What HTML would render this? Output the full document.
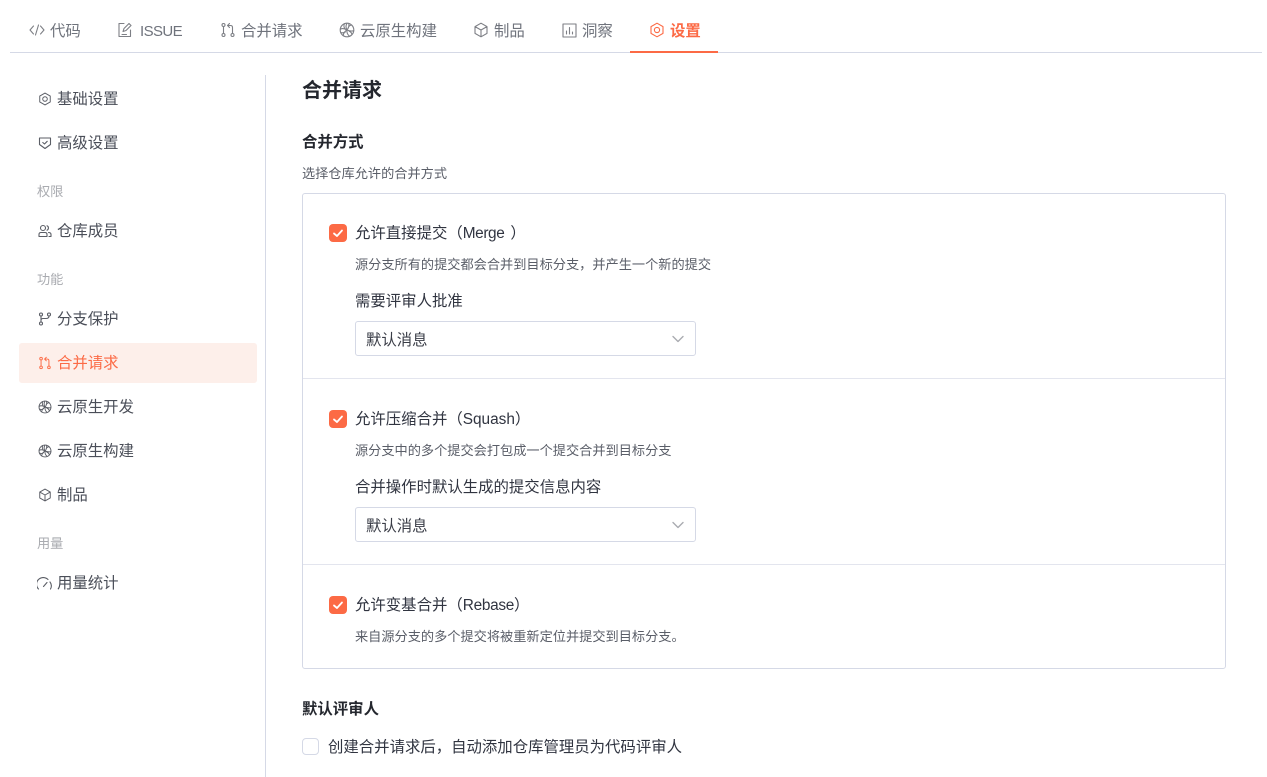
<!DOCTYPE html>
<html lang="zh"><head><meta charset="utf-8"><title>合并请求</title>
<style>
*{box-sizing:border-box}
html,body{margin:0;padding:0;width:1267px;height:777px;overflow:hidden;background:#fff}
body{position:relative;font-family:"Liberation Sans","Noto Sans CJK SC",sans-serif;color:#303440}
.t{position:absolute;white-space:nowrap;line-height:20px;font-size:15.4px}
.tab{color:#6f737c;top:22px}
.side{color:#4a4e58;}
.grp{color:#a9abb0;font-size:13.2px}
.d{font-size:13.2px;color:#5a5e68}
svg{position:absolute;fill:none;stroke-width:1.1;stroke-linecap:round;stroke-linejoin:round}
.g{stroke:#7d7f85}
.s{stroke:#5b5e66}
.o{stroke:#fc6a45}
.box{position:absolute;width:18px;height:18px;border-radius:4px;background:#fc6a45}
.box svg{left:0;top:0;stroke:#fff;stroke-width:1.8}
.sel{position:absolute;left:355px;width:341px;height:35px;border:1px solid #d5d9e6;border-radius:3px;background:#fff}
.sel svg{left:315px;top:10px;stroke:#a9abb0;stroke-width:1.4}
.sel span{position:absolute;left:10px;top:9px;line-height:20px;font-size:15.4px;color:#3a3d47}
</style></head><body>
<svg width="0" height="0" style="position:absolute"><defs>
<g id="hex"><path d="M8 1.200l6 3.400v6.800l-6 3.400-6-3.400V4.600z"/><circle cx="8" cy="8" r="2.600"/></g>
<g id="pr"><circle cx="3.500" cy="3" r="1.500"/><circle cx="3.500" cy="13" r="1.500"/><circle cx="12.500" cy="13" r="1.500"/><path d="M3.500 4.500v7M12.500 11.500V5.500q0-2-2-2H8M9.500 1.500L7.500 3.500l2 2"/></g>
<g id="cloud"><circle cx="8" cy="8" r="6.800"/><path d="M8 1.200q-2 3.300 0 6.800M8 8q-3.800-2.300-6.500-.8M8 8q-3.300 1.800-3.800 5.500M8 8q-.5 3.800 2.500 6.300M8 8q3.500 1.500 6.700.8M8 8q2.500-3 1.800-6.600M5.300 1.800q-1 3 .7 5M12.600 3q-2.500.5-3.300 2.500M1.800 10.500q2.500.8 4.500-.5M13 12.500q-.5-2.300-2.800-3.200"/></g>
<g id="box"><path d="M8 1.200l6 3.400v6.800l-6 3.400-6-3.400V4.600zM2 4.600L8 8l6-3.400M8 8v6.800"/></g>
</defs></svg>

<div style="position:absolute;left:10px;top:52px;width:1252px;height:1px;background:#d5d9e6"></div>
<div style="position:absolute;left:630px;top:51px;width:88px;height:2px;background:#fc6a45"></div>

<svg class="g" style="left:29px;top:22px" width="16" height="16" viewBox="0 0 16 16"><path d="M4.500 4L1 8l3.500 4M11.500 4L15 8l-3.500 4M9.500 3L6.500 13"/></svg>
<span class="t tab" style="left:50px">代码</span>
<svg class="g" style="left:118px;top:22px" width="15" height="16" viewBox="0 0 15 16"><path d="M6 1.500H1v13h11.500V8M5 9.500l1-3 5-5 2 2-5 5zM4 12.500h4.500"/></svg>
<span class="t tab" style="left:140px;font-size:15px;letter-spacing:-.6px">ISSUE</span>
<svg class="g" style="left:220px;top:22px" width="16" height="16" viewBox="0 0 16 16"><use href="#pr"/></svg>
<span class="t tab" style="left:241px">合并请求</span>
<svg class="g" style="left:339px;top:22px" width="16" height="16" viewBox="0 0 16 16"><use href="#cloud"/></svg>
<span class="t tab" style="left:360px">云原生构建</span>
<svg class="g" style="left:473px;top:22px" width="16" height="16" viewBox="0 0 16 16"><use href="#box"/></svg>
<span class="t tab" style="left:494px">制品</span>
<svg class="g" style="left:562px;top:23px" width="15" height="15" viewBox="0 0 15 15"><path d="M1 1h13v13H1zM4.500 11V8M7.500 11V4.500M10.500 11V9"/></svg>
<span class="t tab" style="left:582px">洞察</span>
<svg class="o" style="left:649px;top:22px" width="16" height="16" viewBox="0 0 16 16"><use href="#hex"/></svg>
<span class="t" style="left:670px;top:22px;color:#fc6a45;font-weight:700">设置</span>

<div style="position:absolute;left:265px;top:75px;width:1px;height:702px;background:#d5d9e6"></div>
<div style="position:absolute;left:19px;top:343px;width:238px;height:40px;background:#fdefea;border-radius:3px"></div>

<svg class="s" style="left:38px;top:92px;" width="14" height="14" viewBox="0 0 16 16"><use href="#hex"/></svg>
<span class="t side" style="left:57px;top:90px">基础设置</span>
<svg class="s" style="left:38px;top:136px" width="14" height="14" viewBox="0 0 14 14"><path d="M1.500 2h11v6.500L7 12.500l-5.500-4zM4.800 6.500L6.500 8l2.700-2.700"/></svg>
<span class="t side" style="left:57px;top:134px">高级设置</span>
<span class="t grp" style="left:37px;top:182px">权限</span>
<svg class="s" style="left:38px;top:224px" width="14" height="14" viewBox="0 0 14 14"><circle cx="5" cy="4" r="2.500"/><path d="M1 12.500v-2q0-2 2-2h4q2 0 2 2v2zM9 1.800a2.400 2.400 0 0 1 0 4.400M10.500 8.500q2.500 0 2.500 2v2h-2"/></svg>
<span class="t side" style="left:57px;top:222px">仓库成员</span>
<span class="t grp" style="left:37px;top:270px">功能</span>
<svg class="s" style="left:38px;top:312px" width="14" height="14" viewBox="0 0 14 14"><circle cx="3" cy="2.500" r="1.500"/><circle cx="3" cy="11.500" r="1.500"/><circle cx="11" cy="2.500" r="1.500"/><path d="M3 4v6M3 8.500q0-2 2-2h3q3 0 3-2.500"/></svg>
<span class="t side" style="left:57px;top:310px">分支保护</span>
<svg class="o" style="left:38px;top:356px" width="14" height="14" viewBox="0 0 16 16"><use href="#pr"/></svg>
<span class="t" style="left:57px;top:354px;color:#fc6a45">合并请求</span>
<svg class="s" style="left:38px;top:400px" width="14" height="14" viewBox="0 0 16 16"><use href="#cloud"/></svg>
<span class="t side" style="left:57px;top:398px">云原生开发</span>
<svg class="s" style="left:38px;top:444px" width="14" height="14" viewBox="0 0 16 16"><use href="#cloud"/></svg>
<span class="t side" style="left:57px;top:442px">云原生构建</span>
<svg class="s" style="left:38px;top:488px" width="14" height="14" viewBox="0 0 16 16"><use href="#box"/></svg>
<span class="t side" style="left:57px;top:486px">制品</span>
<span class="t grp" style="left:37px;top:534px">用量</span>
<svg class="s" style="left:37px;top:577px" width="15" height="14" viewBox="0 0 15 14"><path d="M1.500 12A6.500 6.500 0 0 1 11 2.500M13 5a6.500 6.500 0 0 1 .5 7M6.500 9.500L10 5.500"/></svg>
<span class="t side" style="left:57px;top:574px">用量统计</span>

<span class="t" style="left:302px;top:79px;font-size:20px;line-height:24px;font-weight:700;color:#24272e">合并请求</span>
<span class="t" style="left:302px;top:133px;font-weight:700;color:#24272e">合并方式</span>
<span class="t d" style="left:302px;top:164px">选择仓库允许的合并方式</span>

<div style="position:absolute;left:302px;top:193px;width:924px;height:476px;border:1px solid #d5d9e6;border-radius:3px"></div>
<div style="position:absolute;left:303px;top:378px;width:922px;height:1px;background:#e3e5ee"></div>
<div style="position:absolute;left:303px;top:564px;width:922px;height:1px;background:#e3e5ee"></div>

<div class="box" style="left:329px;top:224px"><svg width="18" height="18" viewBox="0 0 18 18"><path d="M5 9.500l3 2.500 5-5.500"/></svg></div>
<span class="t" style="left:355px;top:224px">允许直接提交（<span style="letter-spacing:-.4px;margin-right:6px">Merge</span>）</span>
<span class="t d" style="left:355px;top:255px">源分支所有的提交都会合并到目标分支，并产生一个新的提交</span>
<span class="t" style="left:355px;top:292px">需要评审人批准</span>
<div class="sel" style="top:321px"><span>默认消息</span><svg width="14" height="14" viewBox="0 0 14 14"><path d="M2 4.500l5 5 5-5"/></svg></div>

<div class="box" style="left:329px;top:410px"><svg width="18" height="18" viewBox="0 0 18 18"><path d="M5 9.500l3 2.500 5-5.500"/></svg></div>
<span class="t" style="left:355px;top:410px">允许压缩合并（Squash）</span>
<span class="t d" style="left:355px;top:441px">源分支中的多个提交会打包成一个提交合并到目标分支</span>
<span class="t" style="left:355px;top:478px">合并操作时默认生成的提交信息内容</span>
<div class="sel" style="top:507px"><span>默认消息</span><svg width="14" height="14" viewBox="0 0 14 14"><path d="M2 4.500l5 5 5-5"/></svg></div>

<div class="box" style="left:329px;top:596px"><svg width="18" height="18" viewBox="0 0 18 18"><path d="M5 9.500l3 2.500 5-5.500"/></svg></div>
<span class="t" style="left:355px;top:596px">允许变基合并（<span style="letter-spacing:-.3px">Rebase</span>）</span>
<span class="t d" style="left:355px;top:627px">来自源分支的多个提交将被重新定位并提交到目标分支。</span>

<span class="t" style="left:302px;top:700px;font-weight:700;color:#24272e">默认评审人</span>
<div style="position:absolute;left:302px;top:738px;width:17px;height:17px;border:1px solid #d5d9e6;border-radius:4px"></div>
<span class="t" style="left:328px;top:738px">创建合并请求后，自动添加仓库管理员为代码评审人</span>
</body></html>
